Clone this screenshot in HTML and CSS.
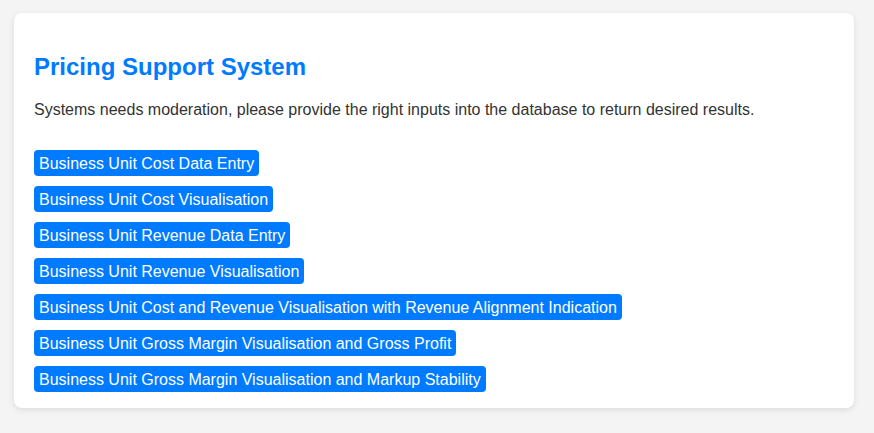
FILE: index.html
```html
<!DOCTYPE html>
<html lang="en">
<head>
  <meta charset="UTF-8">
  <meta name="viewport" content="width=device-width, initial-scale=1.0">
  <title>Pricing Support System</title>
  <link rel="stylesheet" href="styles.css">
</head>
<body>
  <div class="card">
    <h1>Pricing Support System</h1>
    <p>Systems needs moderation, please provide the right inputs into the database to return desired results.</p>
    <ul class="links">
      <li><a href="#">Business Unit Cost Data Entry</a></li>
      <li><a href="#">Business Unit Cost Visualisation</a></li>
      <li><a href="#">Business Unit Revenue Data Entry</a></li>
      <li><a href="#">Business Unit Revenue Visualisation</a></li>
      <li><a href="#">Business Unit Cost and Revenue Visualisation with Revenue Alignment Indication</a></li>
      <li><a href="#">Business Unit Gross Margin Visualisation and Gross Profit</a></li>
      <li><a href="#">Business Unit Gross Margin Visualisation and Markup Stability</a></li>
    </ul>
  </div>
</body>
</html>
```

FILE: styles.css
```css
* {
  box-sizing: border-box;
}

body {
  margin: 0;
  padding: 13px 20px 20px 14px;
  background-color: #f4f4f4;
  font-family: "Liberation Sans", Arial, sans-serif;
  color: #333;
}

.card {
  background-color: #fff;
  border-radius: 8px;
  box-shadow: 0 2px 6px rgba(0, 0, 0, .1);
  padding: 20px 20px 16px;
}

h1 {
  margin: 20px 0 20px;
  font-size: 24px;
  color: #007bff;
}

p {
  margin: 0;
  font-size: 16px;
}

.links {
  list-style: none;
  margin: 31px 0 0;
  padding: 0;
}

.links li {
  margin-bottom: 10px;
}

.links li:last-child {
  margin-bottom: 0;
}

.links a {
  display: inline-block;
  padding: 5px 5px 3px;
  line-height: 18px;
  background-color: #007bff;
  color: #fff;
  text-decoration: none;
  border-radius: 4px;
}
```
